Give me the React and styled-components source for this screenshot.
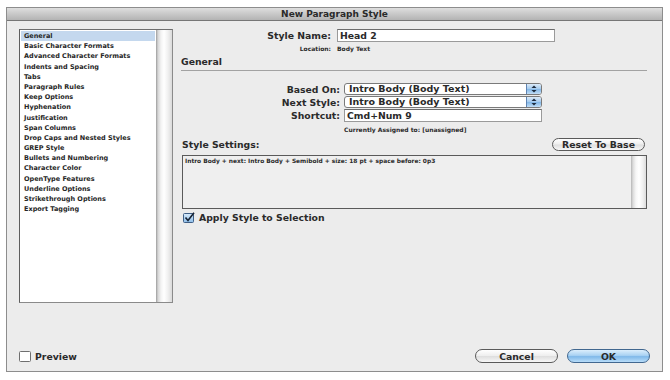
import React from 'react'
import styled, { createGlobalStyle, css } from 'styled-components'

const GlobalStyle = createGlobalStyle`
  html, body {
    margin: 0;
    padding: 0;
    background: #ffffff;
  }
  body {
    font-family: 'DejaVu Sans', 'Liberation Sans', sans-serif;
    color: #2a2a2a;
  }
`

const Window = styled.div`
  margin: 7px 0 0 6px;
  width: 657px;
  height: 365px;
  box-sizing: border-box;
  border: 1px solid #8d8d8d;
  background: #ececec;
  display: flex;
  flex-direction: column;
`

const TitleBar = styled.div`
  height: 12px;
  border-bottom: 1px solid #767676;
  background: linear-gradient(#dedede, #c4c4c4 60%, #b3b3b3);
  font-size: 9px;
  font-weight: bold;
  line-height: 12px;
  text-align: center;
  color: #2a2a2a;
`

const DialogBody = styled.div`
  flex: 1;
  display: flex;
  flex-direction: column;
  padding: 8px 12px 8px 12px;
`

const ContentRow = styled.div`
  display: flex;
  gap: 8px;
`

const ListBox = styled.div`
  width: 154px;
  height: 274px;
  box-sizing: border-box;
  border: 1px solid #8a8a8a;
  border-left-color: #5e5e5e;
  border-top-color: #6e6e6e;
  background: #fff;
  display: flex;
`

const Items = styled.div`
  flex: 1;
  padding: 1px;
`

const Item = styled.div`
  height: 10.2px;
  line-height: 10.2px;
  padding-left: 3px;
  font-size: 6.5px;
  font-weight: bold;
  white-space: nowrap;
  color: #262626;
  ${p => p.$active && css`
    background: #c4d8ee;
  `}
`

const ScrollTrack = styled.div`
  width: 16px;
  background: linear-gradient(to right, #9c9c9c 0, #d6d6d6 2px, #f3f3f3 5px, #ffffff 8px, #f0f0f0 12px, #dadada 16px);
`

const MainPanel = styled.div`
  flex: 1;
  display: flex;
  flex-direction: column;
  padding-right: 3px;
`

const FieldRow = styled.div`
  display: flex;
  align-items: center;
  height: ${p => p.$h}px;
  margin-top: ${p => p.$mt || 0}px;
`

const Label = styled.div`
  width: ${p => p.$w}px;
  flex-shrink: 0;
  box-sizing: border-box;
  padding-right: ${p => p.$gap}px;
  text-align: right;
  font-size: ${p => p.$small ? 6 : 9.3}px;
  font-weight: bold;
  white-space: nowrap;
`

const SmallValue = styled.div`
  font-size: 6px;
  font-weight: bold;
  white-space: nowrap;
`

const TextInput = styled.div`
  width: ${p => p.$w}px;
  height: ${p => p.$h}px;
  box-sizing: border-box;
  border: 1px solid #9a9a9a;
  border-top-color: #6c6c6c;
  background: #fff;
  padding-left: 2px;
  font-size: 9.3px;
  font-weight: bold;
  line-height: ${p => p.$h - 2}px;
  white-space: nowrap;
`

const SectionTitle = styled.div`
  margin-top: 4px;
  height: 12px;
  line-height: 12px;
  font-size: 9.3px;
  font-weight: bold;
`

const Divider = styled.div`
  margin-top: 2px;
  border-top: 1px solid #a2a2a2;
`

const Select = styled.div`
  width: 198px;
  height: 12px;
  box-sizing: border-box;
  display: flex;
  border: 1px solid #7a7a7a;
  border-radius: 3px;
  background: #fff;
  overflow: hidden;
`

const SelectText = styled.div`
  flex: 1;
  padding-left: 4px;
  font-size: 9.5px;
  font-weight: bold;
  line-height: 10px;
  white-space: nowrap;
`

const SelectArrows = styled.div`
  width: 14px;
  border-left: 1px solid #5f84b3;
  background: linear-gradient(#dcebf9, #a9cdef 45%, #86b9e8 55%, #c2def6);
  display: flex;
  align-items: center;
  justify-content: center;
`

const Note = styled.div`
  margin-top: 4px;
  margin-left: 163px;
  height: 7px;
  line-height: 7px;
  font-size: 6px;
  font-weight: bold;
  white-space: nowrap;
`

const SettingsHeader = styled.div`
  margin-top: 4px;
  height: 14px;
  display: flex;
  align-items: center;
  justify-content: space-between;
  padding-left: 1px;
  font-size: 9.3px;
  font-weight: bold;
`

const PillButton = styled.div`
  width: ${p => p.$w}px;
  height: ${p => p.$h || 13}px;
  margin-right: ${p => p.$mr || 0}px;
  box-sizing: border-box;
  border: 1px solid #5a5a5a;
  border-radius: 8px;
  background: linear-gradient(#ffffff, #eeeeee 48%, #dedede 52%, #f7f7f7);
  display: flex;
  align-items: center;
  justify-content: center;
  font-size: 9.3px;
  font-weight: bold;
  color: #2a2a2a;
  ${p => p.$primary && css`
    border-color: #41678f;
    background: linear-gradient(#dbeefc, #a9d2f3 45%, #80b9ea 55%, #b8dcf8);
  `}
`

const SettingsBox = styled.div`
  margin-top: 4px;
  margin-left: 1px;
  height: 54px;
  box-sizing: border-box;
  border: 1px solid #5a5a5a;
  display: flex;
  background: #efefef;
`

const SettingsText = styled.div`
  flex: 1;
  padding: 2px 2px;
  font-size: 5.9px;
  font-weight: bold;
  white-space: nowrap;
  color: #2a2a2a;
`

const BoxScroll = styled.div`
  width: 15px;
  background: linear-gradient(to right, #b5b5b5 0, #dcdcdc 2px, #f6f6f6 5px, #ffffff 8px, #efefef 12px, #dcdcdc 15px);
`

const CheckRow = styled.div`
  margin-top: ${p => p.$mt || 0}px;
  margin-left: ${p => p.$ml || 0}px;
  display: flex;
  align-items: center;
  gap: 4px;
  height: 11px;
  font-size: 9.3px;
  font-weight: bold;
  white-space: nowrap;
`

const Footer = styled.div`
  margin-top: auto;
  height: 14px;
  display: flex;
  align-items: center;
`

const FooterButtons = styled.div`
  margin-left: auto;
  display: flex;
  gap: 9px;
`

const Arrows = () => (
  <svg width="6" height="8" viewBox="0 0 6 8">
    <path d="M3 0.5 L5.5 3 L0.5 3 Z" fill="#1d2b3d" />
    <path d="M3 7.5 L5.5 5 L0.5 5 Z" fill="#1d2b3d" />
  </svg>
)

const CheckedBox = () => (
  <svg width="12" height="11" viewBox="0 0 12 11">
    <defs>
      <linearGradient id="cb" x1="0" y1="0" x2="0" y2="1">
        <stop offset="0" stopColor="#d9ebfa" />
        <stop offset="1" stopColor="#8dbde9" />
      </linearGradient>
    </defs>
    <rect x="0.5" y="1.5" width="10" height="9" rx="1" fill="url(#cb)" stroke="#3f5f86" />
    <path d="M2.5 5.5 L5 8.5 L11 0.8" fill="none" stroke="#162233" strokeWidth="1.6" />
  </svg>
)

const EmptyBox = () => (
  <svg width="12" height="11" viewBox="0 0 12 11">
    <rect x="0.5" y="0.5" width="11" height="10" rx="1" fill="#fff" stroke="#6f6f6f" />
  </svg>
)

const categories = [
  'General',
  'Basic Character Formats',
  'Advanced Character Formats',
  'Indents and Spacing',
  'Tabs',
  'Paragraph Rules',
  'Keep Options',
  'Hyphenation',
  'Justification',
  'Span Columns',
  'Drop Caps and Nested Styles',
  'GREP Style',
  'Bullets and Numbering',
  'Character Color',
  'OpenType Features',
  'Underline Options',
  'Strikethrough Options',
  'Export Tagging',
]

const App = () => {
  return (
    <>
      <GlobalStyle />
      <Window>
        <TitleBar>New Paragraph Style</TitleBar>
        <DialogBody>
          <ContentRow>
            <ListBox>
              <Items>
                {categories.map((c, i) => (
                  <Item key={c} $active={i === 0}>{c}</Item>
                ))}
              </Items>
              <ScrollTrack />
            </ListBox>

            <MainPanel>
              <FieldRow $h={13}>
                <Label $w={156} $gap={6}>Style Name:</Label>
                <TextInput $w={218} $h={13}>Head 2</TextInput>
              </FieldRow>
              <FieldRow $h={8} $mt={2}>
                <Label $w={156} $gap={6} $small>Location:</Label>
                <SmallValue>Body Text</SmallValue>
              </FieldRow>

              <SectionTitle>General</SectionTitle>
              <Divider />

              <FieldRow $h={12} $mt={12}>
                <Label $w={163} $gap={4}>Based On:</Label>
                <Select>
                  <SelectText>Intro Body (Body Text)</SelectText>
                  <SelectArrows><Arrows /></SelectArrows>
                </Select>
              </FieldRow>
              <FieldRow $h={12} $mt={1}>
                <Label $w={163} $gap={4}>Next Style:</Label>
                <Select>
                  <SelectText>Intro Body (Body Text)</SelectText>
                  <SelectArrows><Arrows /></SelectArrows>
                </Select>
              </FieldRow>
              <FieldRow $h={13} $mt={1}>
                <Label $w={163} $gap={4}>Shortcut:</Label>
                <TextInput $w={198} $h={13}>Cmd+Num 9</TextInput>
              </FieldRow>
              <Note>Currently Assigned to: [unassigned]</Note>

              <SettingsHeader>
                <span>Style Settings:</span>
                <PillButton $w={93} $mr={2}>Reset To Base</PillButton>
              </SettingsHeader>
              <SettingsBox>
                <SettingsText>Intro Body + next: Intro Body + Semibold + size: 18 pt + space before: 0p3</SettingsText>
                <BoxScroll />
              </SettingsBox>

              <CheckRow $mt={3} $ml={2}>
                <CheckedBox />
                <span>Apply Style to Selection</span>
              </CheckRow>
            </MainPanel>
          </ContentRow>

          <Footer>
            <CheckRow>
              <EmptyBox />
              <span>Preview</span>
            </CheckRow>
            <FooterButtons>
              <PillButton $w={83} $h={14}>Cancel</PillButton>
              <PillButton $w={83} $h={14} $primary>OK</PillButton>
            </FooterButtons>
          </Footer>
        </DialogBody>
      </Window>
    </>
  )
}

export default App
